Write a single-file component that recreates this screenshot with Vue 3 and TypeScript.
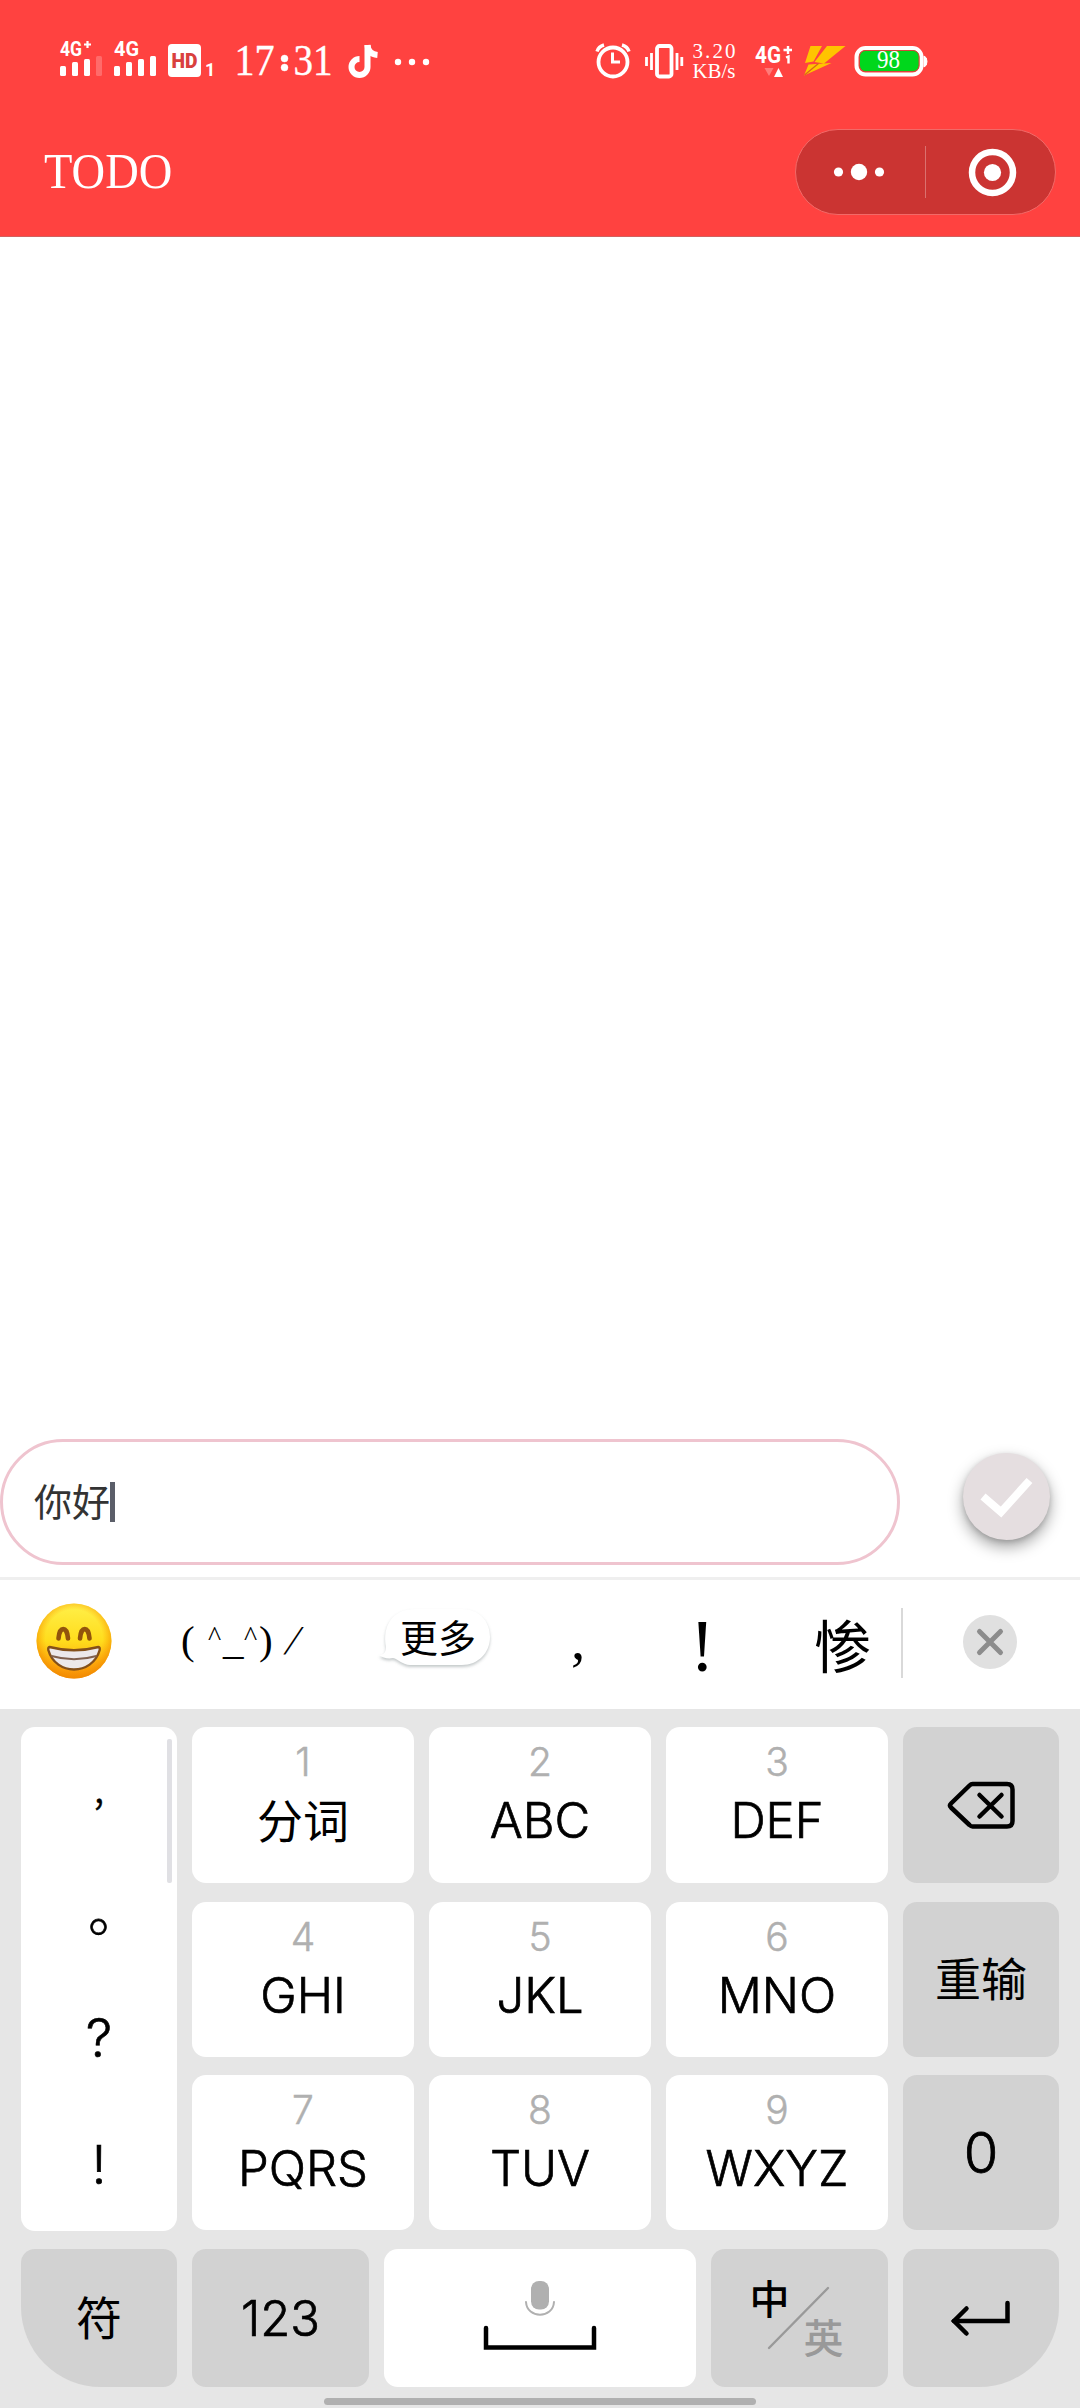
<script setup lang="ts">
import { ref } from 'vue'

interface LetterKey {
  digit: string
  label: string
  cjk?: boolean
}

const draft = ref<string>('你好')
const punctuation: string[] = [',', '。', '?', '!']
const letterKeys: LetterKey[] = [
  { digit: '1', label: '分词', cjk: true },
  { digit: '2', label: 'ABC' },
  { digit: '3', label: 'DEF' },
  { digit: '4', label: 'GHI' },
  { digit: '5', label: 'JKL' },
  { digit: '6', label: 'MNO' },
  { digit: '7', label: 'PQRS' },
  { digit: '8', label: 'TUV' },
  { digit: '9', label: 'WXYZ' },
]
</script>

<template>
  <div class="screen">
    <header class="header">
      <div class="status">
        <svg class="sig1" width="44" height="60" viewBox="59 30 44 60" fill="#fff">
          <text x="60" y="55.500" class="net" textLength="22" lengthAdjust="spacingAndGlyphs">4G</text>
          <path d="M84 44.500h7M87.500 41v7" stroke="#fff" stroke-width="2.200" />
          <rect x="60" y="66" width="6" height="10" rx="1.500" />
          <rect x="72" y="62" width="6" height="14" rx="1.500" />
          <rect x="84" y="59" width="6" height="17" rx="1.500" />
          <rect x="96" y="56" width="6" height="20" rx="1.500" opacity=".22" />
        </svg>
        <svg class="sig2" width="46" height="60" viewBox="112 30 46 60" fill="#fff">
          <text x="114" y="55.500" class="net" textLength="25" lengthAdjust="spacingAndGlyphs">4G</text>
          <rect x="114" y="66" width="6" height="10" rx="1.500" />
          <rect x="126" y="62" width="6" height="14" rx="1.500" />
          <rect x="138" y="59" width="6" height="17" rx="1.500" />
          <rect x="150" y="56" width="6" height="20" rx="1.500" />
        </svg>
        <svg class="hd" width="56" height="60" viewBox="167 30 56 60" fill="#fff">
          <rect x="168" y="44" width="33" height="33" rx="4" />
          <text x="171.500" y="67.500" class="hd-text" textLength="26" lengthAdjust="spacingAndGlyphs">HD</text>
          <text x="205" y="76" class="one">1</text>
        </svg>
        <svg class="time" width="100" height="60" viewBox="233 30 100 60" fill="#fff">
          <text x="234.500" y="74.500" textLength="40" lengthAdjust="spacingAndGlyphs">17</text>
          <circle cx="284.500" cy="58.500" r="3.500" />
          <circle cx="284.500" cy="67.500" r="3.500" />
          <text x="293.500" y="74.500" textLength="39" lengthAdjust="spacingAndGlyphs">31</text>
        </svg>
        <svg class="note" width="32" height="60" viewBox="347 30 32 60" fill="none" stroke="#fff" stroke-width="6">
          <path d="M367.500 45V67a8 8 0 1 1-8-8" />
          <path d="M367.500 45c.5 6 4 9.500 10 10" />
        </svg>
        <svg class="more" width="36" height="60" viewBox="394 30 36 60" fill="#fff">
          <circle cx="398" cy="62" r="3.200" />
          <circle cx="412" cy="62" r="3.200" />
          <circle cx="426" cy="62" r="3.200" />
        </svg>
        <svg class="alarm" width="36" height="60" viewBox="595 30 36 60" fill="none" stroke="#fff">
          <circle cx="613" cy="62" r="14.500" stroke-width="3.800" />
          <path d="M612.500 52.500V62H620" stroke-width="3" />
          <path d="M597 51.500q1.500-5 7-6.500M629 51.500q-1.500-5-7-6.500" stroke-width="3.400" />
        </svg>
        <svg class="vibrate" width="40" height="60" viewBox="644 30 40 60" fill="none" stroke="#fff">
          <rect x="657" y="46" width="14.500" height="30.500" rx="2.500" stroke-width="3.800" />
          <path d="M651.500 53v17M646.500 57v9M677 53v17M681.800 57v9" stroke-width="2.800" />
        </svg>
        <svg class="speed" width="46" height="60" viewBox="691 30 46 60" fill="#fff">
          <text x="692.500" y="58" textLength="43">3.20</text>
          <text x="692.500" y="77.500" textLength="43" lengthAdjust="spacingAndGlyphs">KB/s</text>
        </svg>
        <svg class="data" width="40" height="60" viewBox="754 30 40 60" fill="#fff">
          <text x="755" y="62.500" class="net big" textLength="26" lengthAdjust="spacingAndGlyphs">4G</text>
          <path d="M783.500 50h8.500M788 46v8M786 57.500l2.500-1v7" fill="none" stroke="#fff" stroke-width="2.400" />
          <path d="M764.500 68h9l-4.500 8z" opacity=".3" />
          <path d="M774 77h9l-4.500-9z" />
        </svg>
        <svg class="bolt" width="44" height="60" viewBox="803 30 44 60">
          <path d="M810.500 46H822l-8.500 15.500-8.500 1.500zM827 46h18.500L824 63.500l-9.500-1.500zM808.500 64.500l23-1.500L804 75.500z" fill="#ffc400" />
          <path d="M804.500 75l14-11.500" stroke="#d8641e" stroke-width="1.200" />
        </svg>
        <svg class="battery" width="74" height="60" viewBox="854 30 74 60">
          <rect x="856.500" y="48" width="65" height="26.500" rx="9" fill="none" stroke="#fff" stroke-width="4" />
          <rect x="859.500" y="50.500" width="59.500" height="21" rx="6" fill="#00d71c" stroke="#d5453b" stroke-width="1" />
          <path d="M924 56q3 1 3 5.500t-3 5.500z" fill="#fff" stroke="#fff" />
          <text x="877" y="67.500" textLength="23" lengthAdjust="spacingAndGlyphs">98</text>
        </svg>
      </div>

      <div class="navbar">
        <h1 class="title">TODO</h1>
        <div class="capsule">
          <svg width="259" height="84" viewBox="796 130 259 84" fill="#fff">
            <circle cx="838.500" cy="172" r="4.600" />
            <circle cx="859" cy="172" r="8.200" />
            <circle cx="879.500" cy="172" r="4.600" />
            <rect x="925" y="146" width="1" height="52" opacity=".3" />
            <circle cx="992.500" cy="172.500" r="20.500" fill="none" stroke="#fff" stroke-width="6.500" />
            <circle cx="992.500" cy="172.500" r="8.600" />
          </svg>
        </div>
      </div>
    </header>

    <main class="content"></main>

    <section class="composer">
      <div class="field">
        <span>{{ draft }}</span><i class="caret"></i>
      </div>
      <button class="submit" aria-label="确定">
        <svg width="87" height="87" viewBox="963.500 1453.500 87 87">
          <path d="M983.500 1497l18 15.500 28.500-31.500" fill="none" stroke="#fff" stroke-width="7.800" />
        </svg>
      </button>
    </section>

    <section class="candidates">
      <svg class="emoji" width="78" height="78" viewBox="0 0 78 78">
        <defs>
          <linearGradient id="face" x1="0" y1="0" x2="0" y2="1">
            <stop offset="0" stop-color="#fff04a" />
            <stop offset=".5" stop-color="#ffdc1c" />
            <stop offset=".8" stop-color="#fdae10" />
            <stop offset="1" stop-color="#f58a0a" />
          </linearGradient>
          <radialGradient id="rim" cx=".5" cy=".46" r=".54">
            <stop offset=".7" stop-color="#ff9c00" stop-opacity="0" />
            <stop offset="1" stop-color="#f08a00" stop-opacity=".8" />
          </radialGradient>
        </defs>
        <circle cx="39" cy="39" r="37.500" fill="url(#face)" />
        <circle cx="39" cy="39" r="37.500" fill="url(#rim)" />
        <path d="M23.500 36.500c1-12.500 8.500-12.500 9.500 0M45 36.500c1-12.500 8.500-12.500 9.500 0" fill="none" stroke="#92540c" stroke-width="4.600" stroke-linecap="round" />
        <path d="M14.500 45q24.500 6.500 49 0 1.500 0 1.200 3C61 61 50 67.500 39 67.500S17 61 13.300 48q-.3-3 1.200-3z" fill="#ece8ea" stroke="#84501a" stroke-width="2.400" />
        <path d="M16.500 54q22.500 6.500 45 0" fill="none" stroke="#80604e" stroke-width="2.200" />
      </svg>
      <span class="kaomoji"><b>(</b><b>^</b><b>_</b><b>^</b><b>)</b><b>/</b></span>
      <span class="bubble">
        <svg width="118" height="66" viewBox="378 1606 118 66">
          <path d="M415 1609h47c17 0 28 12 28 28s-12 28-28 28h-52c-7 0-12-6-17-7-5 1-10 0-14-3 4 0 7-2 7-8-4-22 7-38 29-38z" fill="#fff" />
        </svg>
        <em>更多</em>
      </span>
      <span class="cand comma">,</span>
      <span class="cand bang">!</span>
      <span class="cand word">惨</span>
      <i class="rule"></i>
      <svg class="clear" width="54" height="54" viewBox="0 0 54 54">
        <circle cx="27" cy="27" r="27" fill="#e0e0e0" />
        <path d="M16.500 16.500l21 21M37.500 16.500l-21 21" stroke="#8c8c8c" stroke-width="5" stroke-linecap="round" />
      </svg>
    </section>

    <section class="keyboard">
      <div class="upper">
        <div class="punct">
          <span v-for="(p, i) in punctuation" :key="p" :class="'p' + i">{{ p }}</span>
          <i class="thumb"></i>
        </div>
        <div class="letters">
          <div v-for="k in letterKeys" :key="k.digit" class="key letter">
            <small>{{ k.digit }}</small>
            <span :class="{ cjk: k.cjk }">{{ k.label }}</span>
          </div>
        </div>
        <div class="side">
          <div class="key gray">
            <svg width="70" height="52" viewBox="946 1778.500 70 52" fill="none" stroke="#000" stroke-linejoin="round" stroke-linecap="round">
              <path d="M972.500 1783.500H1007q5.500 0 5.500 5.500v31.500q0 5.500-5.500 5.500H972.500q-1.500 0-3-1.500L951 1807q-2-2 0-4l18.500-18q1.500-1.500 3-1.500z" stroke-width="4.500" />
              <path d="M979.500 1794.500l22 21.500M1001.500 1794.500l-22 21.500" stroke-width="4.500" />
            </svg>
          </div>
          <div class="key gray redo"><span>重输</span></div>
          <div class="key gray zero">0</div>
        </div>
      </div>
      <div class="bottom">
        <div class="key gray sym"><span>符</span></div>
        <div class="key gray num">123</div>
        <div class="key space">
          <svg width="120" height="76" viewBox="480 2280 120 76" fill="none">
            <rect x="531" y="2281" width="18" height="28.500" rx="8" fill="#b0b0b0" />
            <path d="M526 2302c1 17 27 17 28 0" stroke="#b0b0b0" stroke-width="2" stroke-linecap="round" />
            <path d="M486 2328v19.500H594V2328" stroke="#000" stroke-width="4.500" stroke-linecap="round" />
          </svg>
        </div>
        <div class="key gray lang">
          <span class="zh">中</span>
          <svg width="64" height="64" viewBox="0 0 64 64"><path d="M2 62L61 2" stroke="#999" stroke-width="2.400" stroke-linecap="round" /></svg>
          <span class="en">英</span>
        </div>
        <div class="key gray enter">
          <svg width="64" height="42" viewBox="949 2297 64 42" fill="none" stroke="#000" stroke-width="4.500" stroke-linecap="round">
            <path d="M1007.500 2303v18H954" />
            <path d="M966.500 2308.500L954 2321l12.500 12.500" />
          </svg>
        </div>
      </div>
      <i class="home"></i>
    </section>
  </div>
</template>

<style>
body {
  margin: 0;
  background: #fff;
}
</style>

<style scoped>
* {
  box-sizing: border-box;
}
.screen {
  width: 1080px;
  height: 2408px;
  display: flex;
  flex-direction: column;
  overflow: hidden;
  background: #fff;
  color: #000;
  font-family: Inter, 'Noto Sans CJK SC', sans-serif;
}
svg {
  display: block;
  flex: none;
}
i, em, b {
  font-style: normal;
  font-weight: inherit;
}
.header {
  height: 237px;
  border-bottom: 1px solid #d2605e;
  background: #ff4240;
  flex: none;
}
.status {
  display: flex;
  height: 120px;
  padding-top: 30px;
}
.sig1 { margin-left: 59px; }
.sig2 { margin-left: 9px; }
.hd { margin-left: 9px; }
.net {
  font: 700 20px Roboto, sans-serif;
}
.net.big {
  font-size: 23px;
}
.hd-text {
  font: 900 20px Roboto, sans-serif;
  fill: #d9403e;
}
.one {
  font: 700 18px Roboto, sans-serif;
}
.time {
  margin-left: 10px;
  font: 400 44px 'Liberation Serif', serif;
  stroke: #fff;
  stroke-width: .4px;
}
.note { margin-left: 14px; }
.more { margin-left: 15px; }
.alarm { margin-left: 165px; }
.vibrate { margin-left: 13px; }
.speed {
  margin-left: 7px;
  font: 400 21px 'Liberation Serif', serif;
}
.data { margin-left: 17px; }
.bolt { margin-left: 9px; }
.battery {
  margin-left: 7px;
  font: 400 25px 'Liberation Serif', serif;
  fill: #fff;
}
.navbar {
  display: flex;
  justify-content: space-between;
  padding: 9px 24px 0 44px;
}
.title {
  margin: 0;
  font: 400 50px/84px 'Liberation Serif', serif;
  transform: scaleX(.93);
  transform-origin: left;
  color: #fff;
}
.capsule {
  width: 261px;
  height: 86px;
  border: 1.500px solid #f26a68;
  border-radius: 43px;
  background: #cb3432;
}
.content {
  flex: 1;
}
.composer {
  display: flex;
  align-items: flex-start;
  height: 138px;
  flex: none;
}
.field {
  display: flex;
  align-items: center;
  width: 900px;
  height: 126px;
  padding: 0 0 0 31px;
  border: 3px solid #efc4cf;
  border-radius: 63px;
  font-size: 38px;
  font-family: 'Noto Sans CJK SC', sans-serif;
  color: #333;
}
.field span {
  margin-top: -5px;
}
.caret {
  width: 5px;
  height: 40px;
  background: #5b5e69;
}
.submit {
  width: 87px;
  height: 87px;
  margin: 14px 0 0 63px;
  padding: 0;
  border: 0;
  border-radius: 50%;
  background: #e5dee0;
  box-shadow: 0 7px 15px rgba(0, 0, 0, .36), 0 2px 5px rgba(0, 0, 0, .14);
}
.candidates {
  display: flex;
  height: 132px;
  border-top: 3px solid #efefef;
  font-family: 'Noto Sans CJK SC', sans-serif;
  flex: none;
}
.emoji {
  margin: 22px 0 0 35px;
}
.kaomoji {
  display: flex;
  width: 130px;
  margin: 35px 0 0 68px;
  font: 400 41px/50px 'Liberation Serif', serif;
}
.kaomoji b { flex: none; }
.kaomoji b:nth-child(1) { width: 27px; }
.kaomoji b:nth-child(2) { width: 15px; margin-top: -4px; font-size: 28px; }
.kaomoji b:nth-child(3) { width: 21px; }
.kaomoji b:nth-child(4) { width: 15px; margin-top: -4px; font-size: 28px; }
.kaomoji b:nth-child(5) { width: 22px; }
.kaomoji b:nth-child(6) { transform: skewX(-18deg); }
.bubble {
  display: flex;
  width: 118px;
  height: 66px;
  margin: 26px 0 0 67px;
}
.bubble svg {
  filter: drop-shadow(0 2px 1.500px rgba(60, 75, 80, .3));
}
.bubble em {
  position: relative;
  margin-left: -96px;
  font-size: 38px;
  line-height: 60px;
  white-space: nowrap;
}
.cand {
  flex: none;
  font-size: 57px;
  line-height: 80px;
}
.comma {
  width: 40px;
  margin: 20px 0 0 75px;
  font-family: 'Liberation Serif', serif;
}
.bang {
  width: 40px;
  margin: 26px 0 0 79px;
  font: 400 74px/80px 'Liberation Serif', serif;
}
.word {
  margin: 23px 0 0 84px;
}
.rule {
  width: 2px;
  height: 70px;
  margin: 28px 0 0 30px;
  background: #d9d9d9;
}
.clear {
  margin: 35px 0 0 60px;
}
.keyboard {
  display: flex;
  flex-direction: column;
  height: 699px;
  padding: 18px 21px 0;
  background: #e6e6e6;
  flex: none;
}
.upper {
  display: flex;
  gap: 15px;
  height: 503px;
}
.punct {
  position: relative;
  display: flex;
  flex-direction: column;
  width: 156px;
  height: 504px;
  border-radius: 14px;
  background: #fff;
  text-align: center;
  font: 300 53px/60px Inter, 'Noto Sans CJK SC', sans-serif;
  -webkit-text-stroke: .6px currentColor;
}
.punct span {
  height: 60px;
}
.punct .p0 { margin-top: 28px; font-family: 'Noto Sans CJK SC', sans-serif; font-size: 42px; }
.punct .p1 { margin-top: 64px; font-family: 'Noto Sans CJK SC', sans-serif; font-size: 54px; padding-left: 32px; }
.punct .p2 { margin-top: 69px; }
.punct .p3 { margin-top: 67px; }
.thumb {
  position: absolute;
  left: 146px;
  top: 12px;
  width: 5px;
  height: 144px;
  border-radius: 2px;
  background: #e0e0e4;
}
.letters {
  display: grid;
  grid-template-columns: repeat(3, 222px);
  grid-template-rows: 156px 155px 155px;
  column-gap: 15px;
  row-gap: 18.500px;
}
.side {
  display: grid;
  grid-template-columns: 156px;
  grid-template-rows: 156px 155px 155px;
  row-gap: 18.500px;
}
.key {
  display: flex;
  align-items: center;
  justify-content: center;
  border-radius: 14px;
  background: #fff;
}
.gray {
  background: #d2d2d2;
}
.letter {
  flex-direction: column;
  justify-content: flex-start;
}
.letter small {
  margin-top: 11px;
  font-size: 39px;
  font-weight: 300;
  line-height: 48px;
  color: #b0b0b0;
  -webkit-text-stroke: .5px currentColor;
}
.letter span {
  margin-top: 5px;
  font-size: 49px;
  font-weight: 300;
  line-height: 60px;
  -webkit-text-stroke: .7px currentColor;
}
.letter .cjk {
  margin-top: 2px;
  font-family: 'Noto Sans CJK SC', sans-serif;
  font-size: 46px;
  font-weight: 400;
  -webkit-text-stroke: 0;
}
.redo, .sym {
  font: 400 46px 'Noto Sans CJK SC', sans-serif;
}
.redo span, .sym span {
  margin-top: -7px;
}
.zero {
  font-size: 56px;
  font-weight: 300;
  -webkit-text-stroke: .8px currentColor;
}
.bottom {
  display: flex;
  gap: 15px;
  height: 138px;
  margin-top: 19px;
}
.sym {
  width: 156px;
  border-bottom-left-radius: 80px;
}
.num {
  width: 177px;
  font-size: 49px;
  font-weight: 300;
  -webkit-text-stroke: .7px currentColor;
}
.space {
  width: 312px;
}
.lang {
  width: 177px;
  font-family: 'Noto Sans CJK SC', sans-serif;
  font-size: 40px;
  line-height: 44px;
}
.lang .zh {
  margin: -42px -23px 0 -2px;
  font-weight: 500;
}
.lang .en {
  margin: 36px 4px 0 -27px;
  font-weight: 500;
  color: #999;
}
.enter {
  width: 156px;
  border-bottom-right-radius: 80px;
}
.home {
  width: 432px;
  height: 7px;
  margin: 11px auto 0;
  border-radius: 4px;
  background: #b0b0b0;
}
</style>
